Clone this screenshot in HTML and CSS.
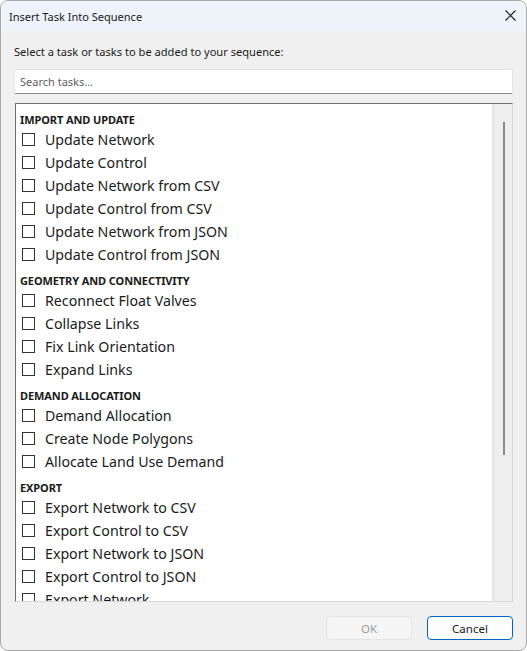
FILE: index.html
```html
<!DOCTYPE html>
<html>
<head>
<meta charset="utf-8">
<link rel="stylesheet" href="styles.css">
</head>
<body>
<div class="window">
  <div class="titlebar">
    <span class="title">Insert Task Into Sequence</span>
    <svg class="close" width="11" height="11" viewBox="0 0 11 11"><path d="M0.5 0.5 L10.5 10.5 M10.5 0.5 L0.5 10.5" stroke="#1a1a1a" stroke-width="1.1" fill="none"/></svg>
  </div>
  <div class="content">
    <div class="prompt">Select a task or tasks to be added to your sequence:</div>
    <div class="search"><span class="placeholder">Search tasks...</span></div>
    <div class="listbox">
      <div class="list">
        <div class="group">
          <div class="header">IMPORT AND UPDATE</div>
          <div class="item"><span class="box"></span><span>Update Network</span></div>
          <div class="item"><span class="box"></span><span>Update Control</span></div>
          <div class="item"><span class="box"></span><span>Update Network from CSV</span></div>
          <div class="item"><span class="box"></span><span>Update Control from CSV</span></div>
          <div class="item"><span class="box"></span><span>Update Network from JSON</span></div>
          <div class="item"><span class="box"></span><span>Update Control from JSON</span></div>
        </div>
        <div class="group">
          <div class="header">GEOMETRY AND CONNECTIVITY</div>
          <div class="item"><span class="box"></span><span>Reconnect Float Valves</span></div>
          <div class="item"><span class="box"></span><span>Collapse Links</span></div>
          <div class="item"><span class="box"></span><span>Fix Link Orientation</span></div>
          <div class="item"><span class="box"></span><span>Expand Links</span></div>
        </div>
        <div class="group">
          <div class="header">DEMAND ALLOCATION</div>
          <div class="item"><span class="box"></span><span>Demand Allocation</span></div>
          <div class="item"><span class="box"></span><span>Create Node Polygons</span></div>
          <div class="item"><span class="box"></span><span>Allocate Land Use Demand</span></div>
        </div>
        <div class="group">
          <div class="header">EXPORT</div>
          <div class="item"><span class="box"></span><span>Export Network to CSV</span></div>
          <div class="item"><span class="box"></span><span>Export Control to CSV</span></div>
          <div class="item"><span class="box"></span><span>Export Network to JSON</span></div>
          <div class="item"><span class="box"></span><span>Export Control to JSON</span></div>
          <div class="item"><span class="box"></span><span>Export Network</span></div>
        </div>
      </div>
      <div class="scrollbar"><div class="thumb"></div></div>
    </div>
    <div class="buttons">
      <button class="btn disabled">OK</button>
      <button class="btn primary">Cancel</button>
    </div>
  </div>
</div>
</body>
</html>
```

FILE: styles.css
```css
html, body {
  margin: 0;
  padding: 0;
  background: #ffffff;
}
body {
  font-family: "Noto Sans", "Open Sans", sans-serif;
  color: #1a1a1a;
}
.window {
  width: 527px;
  height: 651px;
  box-sizing: border-box;
  border: 1px solid #a9a9a9;
  border-radius: 8px;
  background: #f0f0f0;
  overflow: hidden;
  display: flex;
  flex-direction: column;
}
.titlebar {
  height: 30px;
  flex: none;
  background: #eef3f9;
  display: flex;
  align-items: center;
  justify-content: space-between;
  padding: 0 10px 0 8px;
}
.title {
  font-size: 11px;
  color: #1a1a1a;
}
.close {
  display: block;
  margin-top: -1px;
}
.content {
  flex: 1;
  display: flex;
  flex-direction: column;
  padding: 0 13px 0 13px;
}
.prompt {
  font-size: 11.1px;
  line-height: 16px;
  margin-top: 13px;
  color: #1a1a1a;
}
.search {
  margin-top: 9px;
  height: 25px;
  box-sizing: border-box;
  background: #ffffff;
  border: 1px solid #e6e6e6;
  border-bottom: 1px solid #8a8a8a;
  border-radius: 2px;
  display: flex;
  align-items: center;
  padding-left: 5px;
}
.placeholder {
  font-size: 11px;
  color: #5d5d5d;
}
.listbox {
  margin-top: 9px;
  margin-left: 1px;
  height: 499px;
  box-sizing: border-box;
  background: #ffffff;
  border-top: 1px solid #6e6e6e;
  border-left: 1px solid #6e6e6e;
  border-right: 1px solid #d8d8d8;
  border-bottom: 1px solid #d8d8d8;
  display: flex;
  overflow: hidden;
}
.list {
  flex: 1;
  padding-top: 7px;
  overflow: hidden;
}
.group + .group {
  margin-top: 6px;
}
.header {
  height: 17px;
  line-height: 17px;
  padding-left: 4px;
  font-size: 11px;
  font-weight: 700;
  color: #1a1a1a;
  letter-spacing: -0.1px;
}
.item {
  height: 23px;
  display: flex;
  align-items: center;
  padding-left: 6px;
  font-size: 14.2px;
  color: #1a1a1a;
}
.box {
  width: 13px;
  height: 13px;
  box-sizing: border-box;
  border: 1px solid #333333;
  background: #ffffff;
  margin-right: 10px;
  flex: none;
}
.scrollbar {
  width: 20px;
  flex: none;
  background: #eeeeee;
  border-left: 3px solid #e8e8e8;
  box-sizing: border-box;
  position: relative;
}
.thumb {
  position: absolute;
  left: 8px;
  top: 18px;
  width: 2px;
  height: 333px;
  background: #8a8a8a;
}
.buttons {
  margin-top: 14px;
  display: flex;
  justify-content: flex-end;
  gap: 15px;
}
.btn {
  width: 86px;
  height: 24px;
  box-sizing: border-box;
  border-radius: 4px;
  font-family: "Noto Sans", "Open Sans", sans-serif;
  font-size: 11.5px;
  padding: 0;
}
.disabled {
  background: #f5f5f5;
  border: 1px solid #e5e5e5;
  color: #a0a0a0;
}
.primary {
  background: #fdfdfd;
  border: 1px solid #0067c0;
  color: #1a1a1a;
}
```
